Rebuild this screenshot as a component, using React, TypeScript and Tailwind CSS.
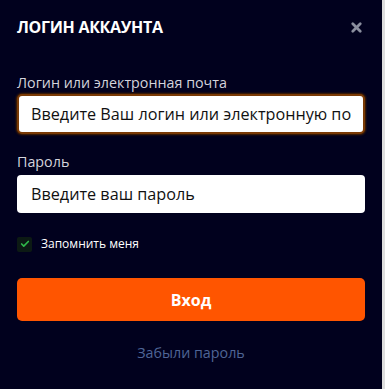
import { Check, X } from "lucide-react";

export default function App() {
  return (
    <div className="flex w-[385px] h-[389px] font-['Open_Sans','Noto_Sans',sans-serif]">
      <div className="w-[382px] h-full bg-[#01011e] px-[17px] pt-[17px] flex flex-col">
        {/* Header */}
        <div className="flex items-center justify-between h-[20px]">
          <h2 className="text-[16px] font-bold text-white leading-none tracking-[-0.3px]">
            ЛОГИН АККАУНТА
          </h2>
          <button className="mr-[1px] text-[#8a8e9e]">
            <X className="w-[15px] h-[15px]" strokeWidth={4.5} />
          </button>
        </div>

        {/* Login */}
        <label className="mt-[36px] text-[14.3px] leading-[20px] text-[#d4d4dc]">
          Логин или электронная почта
        </label>
        <input
          className="mt-[1px] h-[40px] w-full rounded-[5px] bg-white border-2 border-[#7a3a05] shadow-[0_0_2px_1px_#4a2200] pl-[12px] pr-[12px] text-[16.2px] text-[#111] placeholder:text-[#111] outline-none"
          placeholder="Введите Ваш логин или электронную почту"
        />

        {/* Password */}
        <label className="mt-[18px] text-[14.3px] leading-[20px] text-[#d4d4dc]">
          Пароль
        </label>
        <input
          type="password"
          className="mt-[3px] h-[38px] w-full rounded-[4px] bg-white pl-[14px] pr-[12px] text-[16.2px] text-[#111] placeholder:text-[#111] outline-none"
          placeholder="Введите ваш пароль"
        />

        {/* Remember */}
        <div className="mt-[22px] flex items-center gap-[9px]">
          <div className="w-[15px] h-[15px] rounded-[2px] bg-[#0c1a14] flex items-center justify-center">
            <Check className="w-[10px] h-[10px] text-[#2fb84a]" strokeWidth={4} />
          </div>
          <span className="text-[12px] text-white">Запомнить меня</span>
        </div>

        {/* Submit */}
        <button className="mt-[25px] h-[43px] rounded-[5px] bg-[#ff5500] text-white text-[16px] font-bold">
          Вход
        </button>

        <a className="mt-[22px] text-center text-[14.3px] leading-[20px] text-[#4f6596]">Забыли пароль</a>
      </div>
      <div className="w-[3px] h-full bg-[#dedede]" />
    </div>
  );
}
